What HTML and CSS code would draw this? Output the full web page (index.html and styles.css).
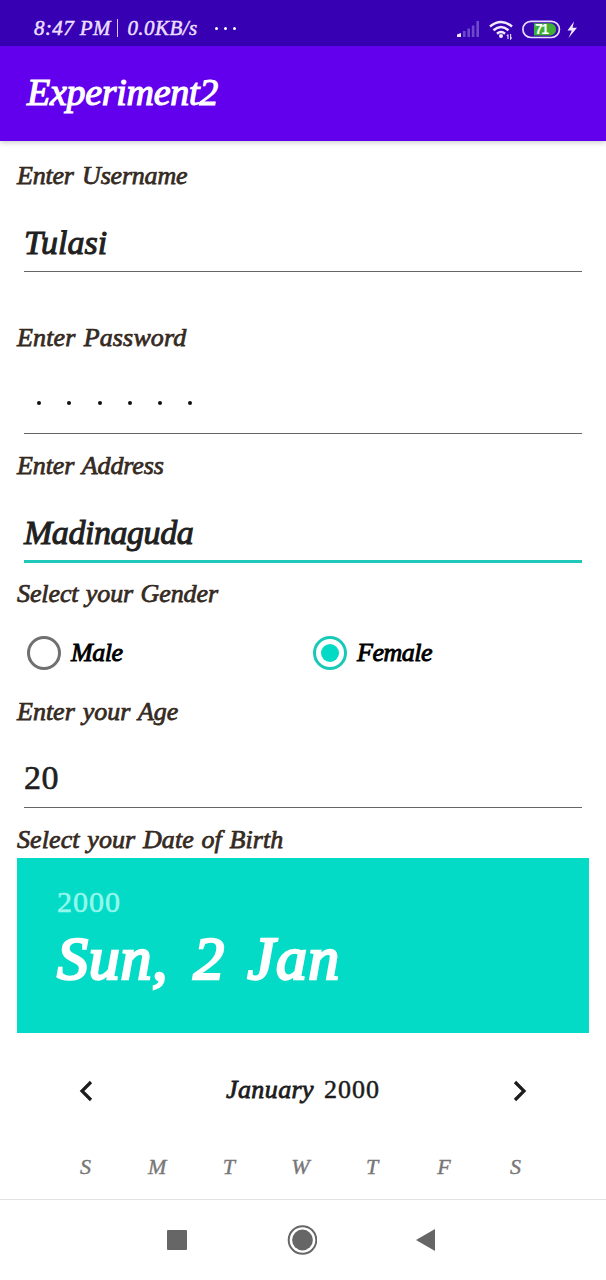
FILE: index.html
```html
<!DOCTYPE html>
<html lang="en">
<head>
<meta charset="utf-8">
<title>Experiment2</title>
<link rel="stylesheet" href="styles.css">
</head>
<body>
<div class="screen">
  <header class="status">
    <span class="clock">8:47 PM</span><span class="divider"></span><span class="speed">0.0KB/s</span>
    <span class="more"><i></i><i></i><i></i></span>
    <svg class="status-icons" width="126" height="24" viewBox="0 0 126 24">
      <path d="M1 21V18.500L5 17V21Z" fill="#f0e6ff"/>
      <path d="M7 21V15h2.600v6zM11.400 21v-8.500h2.600v8.500zM15.800 21V9.500h2.600V21zM20.400 21V5h2.600v16z" fill="#6c4ccb"/>
      <g fill="none" stroke="#f3eaff" stroke-width="2.500">
        <path d="M34 10.500q11-9 22 0M37.500 14.200q7.500-6.500 15 0M41 17.700q4-3.500 8 0"/>
      </g>
      <circle cx="45" cy="20" r="2" fill="#f3eaff"/>
      <path d="M52 18.500v4.500m-1.200-3L52 18.500M54.600 18v5l1.200-1.500" fill="none" stroke="#e7dcff" stroke-width="1.100"/>
      <rect x="66.900" y="5.300" width="36.500" height="16.200" rx="8" fill="#3a08b0" stroke="#eadcff" stroke-width="1.700"/>
      <path d="M78 7.300h16a6 6 0 0 1 0 12.200H78z" fill="#3fae36"/>
      <text class="battery" x="79" y="18.300" textLength="14">71</text>
      <path d="M118 5.500 111.500 14.500h4.300L112.500 22 121 11.800h-4.500z" fill="#f3eaff"/>
    </svg>
  </header>
  <div class="appbar"><h1>Experiment2</h1></div>

  <main class="form">
    <div class="field wide-gap">
      <label class="l-user">Enter Username</label>
      <div class="input v-user">Tulasi</div>
    </div>
    <div class="field">
      <label class="l-pass">Enter Password</label>
      <div class="input dots"><i></i><i></i><i></i><i></i><i></i><i></i></div>
    </div>
    <div class="field address">
      <label class="l-addr">Enter Address</label>
      <div class="input focused v-addr">Madinaguda</div>
    </div>
    <label class="l-gender">Select your Gender</label>
    <div class="radios">
      <div class="radio"><span class="ring"></span><span>Male</span></div>
      <div class="radio"><span class="ring checked"></span><span>Female</span></div>
    </div>
    <div class="field">
      <label class="l-age">Enter your Age</label>
      <div class="input v-age">20</div>
    </div>
    <label class="l-dob">Select your Date of Birth</label>

    <section class="picker">
      <div class="picker-head">
        <div class="year">2000</div>
        <div class="date"><span class="d1">Sun,</span><span class="d2">2</span><span class="d3">Jan</span></div>
      </div>
      <div class="month">
        <svg width="16" height="24" viewBox="0 0 16 24"><path d="M13 3 4 12l9 9" fill="none" stroke="#1c1c1c" stroke-width="3.200"/></svg>
        <div class="month-name"><span class="m1">January</span><span class="m2">2000</span></div>
        <svg width="16" height="24" viewBox="0 0 16 24"><path d="m3 3 9 9-9 9" fill="none" stroke="#1c1c1c" stroke-width="3.200"/></svg>
      </div>
      <div class="weekdays"><span>S</span><span>M</span><span>T</span><span>W</span><span>T</span><span>F</span><span>S</span></div>
    </section>
  </main>

  <nav class="navbar">
    <svg width="32" height="32" viewBox="0 0 32 32"><rect x="6" y="6" width="20" height="20" rx="1" fill="#666"/></svg>
    <svg width="32" height="32" viewBox="0 0 32 32"><circle cx="17.500" cy="16" r="13.800" fill="none" stroke="#666" stroke-width="2"/><circle cx="17.500" cy="16" r="10.400" fill="#666"/></svg>
    <svg width="32" height="32" viewBox="0 0 32 32"><path d="M7 16 26 5v22z" fill="#666"/></svg>
  </nav>
</div>
</body>
</html>
```

FILE: styles.css
```css
* { box-sizing: border-box; }
body { margin: 0; background: #fff; }
.screen {
  width: 606px; height: 1280px; overflow: hidden;
  display: flex; flex-direction: column;
  font-family: "Liberation Serif", serif; font-style: italic;
  white-space: nowrap;
}
.status {
  height: 46px; flex: none; background: #3700b3; color: #eadfff;
  display: flex; align-items: center; padding: 10px 24px 0 34px;
  font-size: 21px; -webkit-text-stroke: .5px;
}
.clock { letter-spacing: .4px; }
.divider { width: 1.500px; height: 18px; background: #d8c8fa; margin: 0 9px 0 6px; }
.speed { letter-spacing: .45px; }
.more { display: flex; gap: 6px; margin-left: 17px; }
.more i { width: 3px; height: 3px; border-radius: 50%; background: #fff; }
.status-icons { margin-left: auto; }
.battery { font: bold 14px "Liberation Sans", sans-serif; fill: #fff; -webkit-text-stroke: 0; }
.appbar {
  height: 94.500px; flex: none; background: #6200ee; color: #fff;
  padding: 23px 0 0 27px; box-shadow: 0 2px 5px rgba(0,0,0,.18);
}
h1 { margin: 0; font-size: 38px; line-height: 46px; font-weight: 400; letter-spacing: -.3px; -webkit-text-stroke: 1.200px; }
.form { height: 1058.500px; flex: none; padding: 17.500px 17px 0; overflow: hidden; }
.field { margin-bottom: 14px; }
.wide-gap { margin-bottom: 48px; }
label { display: block; height: 32px; padding-top: 1px; line-height: 33px; font-size: 26px; color: #352a22; -webkit-text-stroke: .75px; }
.l-user { letter-spacing: -.2px; word-spacing: 2px; }
.l-pass { letter-spacing: .15px; word-spacing: 1.500px; }
.l-addr { letter-spacing: -.1px; word-spacing: 1.500px; }
.l-gender { letter-spacing: -.1px; word-spacing: 1px; }
.l-age { word-spacing: 1.500px; }
.l-dob { letter-spacing: .1px; word-spacing: 1px; }
.input {
  height: 82px; margin: 0 7px; padding-top: 31px; border-bottom: 1.500px solid #666;
  font-size: 34px; line-height: 44px; color: #202020; -webkit-text-stroke: 1px;
}
.address { margin-bottom: 13px; }
.focused { height: 83px; border-bottom: 3px solid #1fc8b8; letter-spacing: -.45px; }
.dots { display: flex; gap: 26.300px; padding: 49px 0 0 13px; }
.dots i { width: 4px; height: 4px; border-radius: 50%; background: #111; }
.v-age { font-style: normal; padding-top: 30px; -webkit-text-stroke: .6px; letter-spacing: .5px; }
.radios { height: 86px; display: grid; grid-template-columns: 1fr 1fr; padding: 3px 0 0 10px; }
.radio { display: flex; align-items: center; gap: 10px; font-size: 26px; color: #000; letter-spacing: -.5px; -webkit-text-stroke: .9px; }
.radio:last-child { padding-left: 5px; }
.ring { width: 34px; height: 34px; border-radius: 50%; border: 3px solid #707070; }
.checked { border-color: #18c9b8; display: grid; place-items: center; }
.checked::after { content: ""; width: 18px; height: 18px; border-radius: 50%; background: #03dac5; }
.picker { margin-top: 4px; }
.picker-head { height: 175px; background: #03dbc6; color: #fff; padding: 27px 0 0 40px; }
.year { font-style: normal; font-size: 30px; line-height: 34px; letter-spacing: 1px; color: #92f8ec; -webkit-text-stroke: .6px; }
.date { display: flex; font-size: 62px; line-height: 70px; margin-top: 4px; -webkit-text-stroke: 2.600px; }
.d1 { letter-spacing: .7px; }
.d2 { margin-left: 25px; }
.d3 { margin-left: 23px; letter-spacing: 1.200px; }
.month { display: flex; justify-content: space-between; align-items: center; height: 40px; margin: 38px 61px 0; color: #1c1c1c; }
.month-name { display: flex; gap: 10px; font-size: 26px; margin-top: -3px; -webkit-text-stroke: .8px; }
.m1 { letter-spacing: .4px; }
.m2 { font-style: normal; letter-spacing: 1px; -webkit-text-stroke: .5px; }
.weekdays { display: grid; grid-template-columns: repeat(7, 71.700px); justify-content: center; text-align: center; margin-top: 42px; font-size: 22px; line-height: 28px; color: #777; -webkit-text-stroke: .4px; padding-right: 5px; }
.navbar {
  height: 81px; flex: none; border-top: 1px solid #e2e2e2; background: #fff;
  display: flex; justify-content: space-between; align-items: center; padding: 0 165px 0 161px;
}
```
